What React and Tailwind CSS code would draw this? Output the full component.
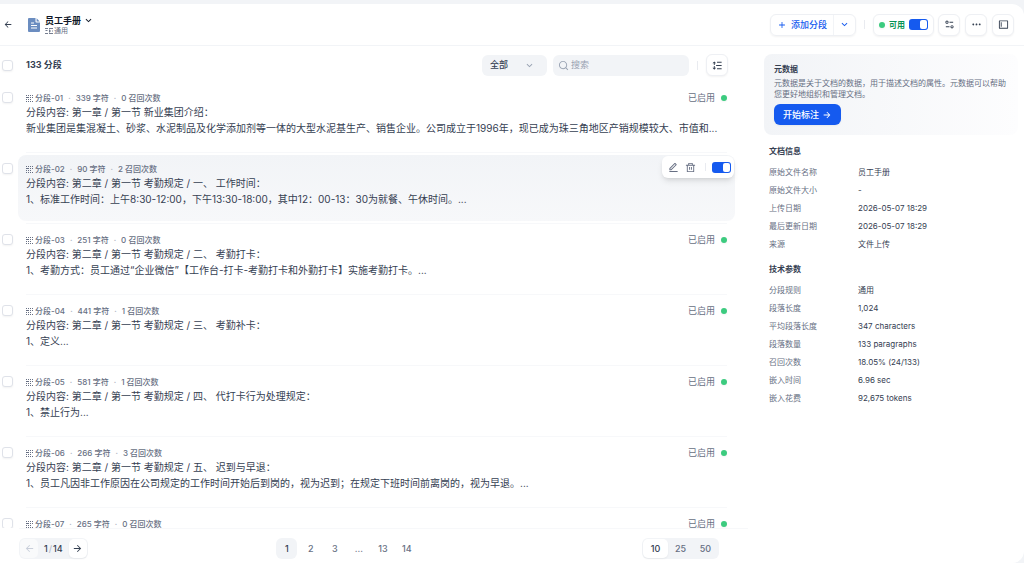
import React, { useState } from 'react';
import {
    RiArrowLeftLine,
    RiArrowRightLine,
    RiArrowDownSLine,
    RiAddLine,
    RiSearchLine,
    RiEditLine,
    RiDeleteBinLine,
    RiEqualizer2Line,
    RiMoreFill,
    RiLayoutLeft2Line,
    RiLineHeight,
} from 'react-icons/ri';

const segments = [
    {
        id: '01',
        chars: 339,
        hits: 0,
        title: '分段内容: 第一章 / 第一节 新业集团介绍：',
        text: '新业集团是集混凝土、砂浆、水泥制品及化学添加剂等一体的大型水泥基生产、销售企业。公司成立于1996年，现已成为珠三角地区产销规模较大、市值和...',
    },
    {
        id: '02',
        chars: 90,
        hits: 2,
        title: '分段内容: 第二章 / 第一节 考勤规定 / 一、 工作时间：',
        text: '1、标准工作时间：上午8:30-12:00，下午13:30-18:00，其中12：00-13：30为就餐、午休时间。...',
        active: true,
    },
    {
        id: '03',
        chars: 251,
        hits: 0,
        title: '分段内容: 第二章 / 第一节 考勤规定 / 二、 考勤打卡：',
        text: '1、考勤方式：员工通过“企业微信”【工作台-打卡-考勤打卡和外勤打卡】实施考勤打卡。...',
    },
    {
        id: '04',
        chars: 441,
        hits: 1,
        title: '分段内容: 第二章 / 第一节 考勤规定 / 三、 考勤补卡：',
        text: '1、定义...',
    },
    {
        id: '05',
        chars: 581,
        hits: 1,
        title: '分段内容: 第二章 / 第一节 考勤规定 / 四、 代打卡行为处理规定：',
        text: '1、禁止行为...',
    },
    {
        id: '06',
        chars: 266,
        hits: 3,
        title: '分段内容: 第二章 / 第一节 考勤规定 / 五、 迟到与早退：',
        text: '1、员工凡因非工作原因在公司规定的工作时间开始后到岗的，视为迟到；在规定下班时间前离岗的，视为早退。...',
    },
    { id: '07', chars: 265, hits: 0 },
];

const docInfo = [
    ['原始文件名称', '员工手册'],
    ['原始文件大小', '-'],
    ['上传日期', '2026-05-07 18:29'],
    ['最后更新日期', '2026-05-07 18:29'],
    ['来源', '文件上传'],
];

const techParams = [
    ['分段规则', '通用'],
    ['段落长度', '1,024'],
    ['平均段落长度', '347 characters'],
    ['段落数量', '133 paragraphs'],
    ['召回次数', '18.05% (24/133)'],
    ['嵌入时间', '6.96 sec'],
    ['嵌入花费', '92,675 tokens'],
];

const Checkbox = ({ label }) => (
    <input
        type="checkbox"
        aria-label={label}
        className="block size-[11px] shrink-0 appearance-none rounded-[3px] border border-[#dfe2e9] bg-white shadow-xs checked:border-[#155aef] checked:bg-[#155aef]"
    />
);

const Toggle = ({ label, checked, onChange }) => (
    <input
        type="checkbox"
        role="switch"
        aria-label={label}
        checked={checked}
        onChange={(e) => onChange(e.target.checked)}
        className="flex h-[11px] w-[19px] shrink-0 appearance-none items-center rounded-[3px] bg-[#d0d5dc] px-px before:block before:h-[9px] before:w-[7px] before:rounded-[2px] before:bg-white checked:justify-end checked:bg-[#155aef]"
    />
);

const Dot = () => <span className="size-[6px] shrink-0 rounded-full bg-[#3ccb7f] shadow-xs"></span>;

const IconButton = ({ label, children }) => (
    <button
        aria-label={label}
        className="flex size-[22px] shrink-0 items-center justify-center rounded-md border border-[#eef0f4] bg-white text-[#354052] shadow-xs"
    >
        {children}
    </button>
);

const GridIcon = () => (
    <svg viewBox="0 0 8 8" className="size-2 shrink-0" fill="#676f83" aria-hidden="true">
        <path d="M0 1h1v1H0zM2 1h1v1H2zM4 1h1v1H4zM6 1h1v1H6zM0 3h3v1H0zM4 3h1v1H4zM6 3h1v1H6zM0 5h1v1H0zM2 5h1v1H2zM4 5h1v1H4zM0 7h1v1H0zM2 7h1v1H2zM4 7h1v1H4zM6 7h1v1H6z" />
    </svg>
);

const ModeIcon = () => (
    <svg viewBox="0 0 8 8" className="size-2 shrink-0" fill="none" stroke="#676f83" strokeWidth="0.9" aria-hidden="true">
        <path d="M0 1.5h3M4 1.5h4M0 6.5h3M4 6.5h4M.5 3.5h2M4.5 2.5v3M4.5 4H6M7 4h1" />
    </svg>
);

const FileIcon = () => (
    <svg viewBox="0 0 12 14" className="h-[14px] w-3 shrink-0" aria-hidden="true">
        <path d="M1 0h6.5v3.6a.9.9 0 0 0 .9.9H12V13a1 1 0 0 1-1 1H1a1 1 0 0 1-1-1V1a1 1 0 0 1 1-1z" fill="#6b8dc0" />
        <path d="M8.6.3 11.7 3.4H8.6z" fill="#6b8dc0" />
        <path d="M3 5h3M3 7.5h6M3 10h6" stroke="#fff" strokeWidth="1" />
    </svg>
);

const Segment = ({ item }) => {
    const [enabled, setEnabled] = useState(true);

    return (
        <li className="flex items-start gap-[5px]">
            <div className="pt-[8px]">
                <Checkbox label={`分段-${item.id}`} />
            </div>
            <div className="min-w-0 flex-1">
                <div className={`relative h-[66px] rounded-lg px-2 pt-[7px] ${item.active ? 'bg-linear-to-b from-[#f2f4f7] to-[#f7f8fa]' : ''}`}>
                    <div className="flex h-[13px] items-center justify-between">
                        <div className="flex items-center text-[8px] font-medium text-[#676f83]">
                            <GridIcon />
                            <span className="ml-px">分段-{item.id}</span>
                            <span className="mx-[5px] text-[#b4bac6]">·</span>
                            <span>{item.chars} 字符</span>
                            <span className="mx-[5px] text-[#b4bac6]">·</span>
                            <span>{item.hits} 召回次数</span>
                        </div>
                        {!item.active && (
                            <div className="flex items-center gap-[6px] text-[9px] text-[#676f83]">
                                已启用
                                <Dot />
                            </div>
                        )}
                    </div>
                    {item.title && <p className="truncate text-[10px] leading-4 text-[#354052]">{item.title}</p>}
                    {item.text && <p className="truncate text-[10px] leading-4 text-[#354052]">{item.text}</p>}

                    {item.active && (
                        <div className="absolute top-px right-px flex h-[22px] items-center rounded-md bg-white px-[3px] text-[#676f83] shadow-md">
                            <button aria-label="编辑" className="flex h-4 w-[17px] items-center justify-center">
                                <RiEditLine size={11} />
                            </button>
                            <button aria-label="删除" className="flex h-4 w-[17px] items-center justify-center">
                                <RiDeleteBinLine size={11} />
                            </button>
                            <span className="mx-[6px] h-2 w-px bg-[#e9ebf0]"></span>
                            <Toggle label="启用分段" checked={enabled} onChange={setEnabled} />
                        </div>
                    )}
                </div>
                <div className="mx-2 my-[2px] h-px bg-[#f7f8fa]"></div>
            </div>
        </li>
    );
};

const InfoList = ({ title, rows }) => (
    <section>
        <h3 className="text-[8px] leading-3 font-bold text-[#354052]">{title}</h3>
        <dl className="mt-[9px] grid grid-cols-[89px_1fr] gap-y-[6px] text-[8px] leading-3">
            {rows.map(([name, value]) => (
                <React.Fragment key={name}>
                    <dt className="text-[#676f83]">{name}</dt>
                    <dd className="text-[#354052]">{value}</dd>
                </React.Fragment>
            ))}
        </dl>
    </section>
);

const App = () => {
    const [available, setAvailable] = useState(true);
    const [page, setPage] = useState('1');
    const [limit, setLimit] = useState(10);

    return (
        <div className="h-screen bg-[#f2f4f7] pt-1 font-['Inter','Noto_Sans_CJK_SC',sans-serif] [text-spacing-trim:space-all]">
            <div className="flex h-full flex-col overflow-hidden rounded-r-xl bg-white">
                {/* Thanh tiêu đề */}
                <header className="flex h-[42px] shrink-0 items-center border-b border-[#f2f4f7] pr-[10px] pl-[3px]">
                    <button aria-label="返回" className="flex size-[10px] items-center justify-center text-[#354052]">
                        <RiArrowLeftLine size={11} />
                    </button>
                    <div className="ml-[15px] flex items-center gap-[5px]">
                        <FileIcon />
                        <div>
                            <button className="flex items-center gap-[2px] text-[9px] leading-3 font-bold text-[#101828]">
                                员工手册
                                <RiArrowDownSLine size={11} />
                            </button>
                            <div className="flex items-center gap-px text-[7px] leading-2 text-[#676f83]">
                                <ModeIcon />
                                通用
                            </div>
                        </div>
                    </div>

                    <div className="ml-auto flex items-center">
                        <div className="flex h-[22px] rounded-md border border-[#eef0f4] text-[9px] font-medium text-[#155aef] shadow-xs">
                            <button className="flex items-center gap-1 border-r border-[#f2f4f7] px-[6px]">
                                <RiAddLine size={10} />
                                添加分段
                            </button>
                            <button aria-label="更多添加方式" className="flex w-[21px] items-center justify-center">
                                <RiArrowDownSLine size={11} />
                            </button>
                        </div>
                        <span className="mx-2 h-[9px] w-px bg-[#e9ebf0]"></span>
                        <div className="flex h-[22px] items-center gap-1 rounded-md border border-[#eef0f4] px-[5px] text-[8px] font-bold text-[#079455] shadow-xs">
                            <Dot />
                            可用
                            <Toggle label="可用" checked={available} onChange={setAvailable} />
                        </div>
                        <div className="ml-1 flex gap-[5px]">
                            <IconButton label="设置"><RiEqualizer2Line size={11} /></IconButton>
                            <IconButton label="更多"><RiMoreFill size={11} /></IconButton>
                            <IconButton label="侧栏"><RiLayoutLeft2Line size={11} /></IconButton>
                        </div>
                    </div>
                </header>

                <div className="flex min-h-0 flex-1">
                    {/* Danh sách phân đoạn */}
                    <main className="flex min-w-0 flex-1 flex-col pl-[2px]">
                        <div className="flex h-[38px] shrink-0 items-center pr-5">
                            <Checkbox label="全选" />
                            <h2 className="ml-[13px] text-[9px] font-bold text-[#354052]">133 分段</h2>
                            <div className="ml-auto flex items-center">
                                <div className="relative">
                                    <select aria-label="状态" className="block h-[21px] w-[65px] appearance-none rounded-md bg-[#f2f4f7] px-2 text-[9px] font-medium text-[#354052]">
                                        <option>全部</option>
                                        <option>已启用</option>
                                    </select>
                                    <RiArrowDownSLine size={11} className="pointer-events-none absolute top-[5px] right-3 text-[#98a2b2]" />
                                </div>
                                <label className="ml-[6px] flex h-[21px] w-[136px] items-center gap-[2px] rounded-md bg-[#f2f4f7] px-[5px]">
                                    <RiSearchLine size={11} className="shrink-0 text-[#98a2b2]" />
                                    <input type="text" aria-label="搜索" placeholder="搜索" className="w-full min-w-0 text-[9px] outline-none placeholder:text-[#98a2b2]" />
                                </label>
                                <span className="mx-2 h-[9px] w-px bg-[#e9ebf0]"></span>
                                <IconButton label="展开"><RiLineHeight size={11} /></IconButton>
                            </div>
                        </div>

                        <ul className="min-h-0 flex-1 overflow-hidden pr-[13px]">
                            {segments.map((item) => (
                                <Segment key={item.id} item={item} />
                            ))}
                        </ul>

                        <footer className="ml-[17px] flex h-[35px] shrink-0 items-start justify-between border-t border-[#f7f8fa] pt-[9px] pr-[29px] text-[9px] font-medium text-[#676f83]">
                            <div className="flex h-[21px] items-center rounded-md bg-[#f2f4f7] p-px">
                                <button aria-label="上一页" disabled className="flex h-[19px] w-[18px] items-center justify-center rounded-[5px] bg-[#f9fafb] text-[#c8ceda]">
                                    <RiArrowLeftLine size={11} />
                                </button>
                                <span className="px-[6px] text-[#354052]">
                                    1<span className="px-px text-[#b4bac6]">/</span>14
                                </span>
                                <button aria-label="下一页" className="flex h-[19px] w-[18px] items-center justify-center rounded-[5px] bg-white text-[#354052] shadow-xs">
                                    <RiArrowRightLine size={11} />
                                </button>
                            </div>
                            <nav className="flex gap-[3px]">
                                {['1', '2', '3', '...', '13', '14'].map((p) => (
                                    <button
                                        key={p}
                                        onClick={() => setPage(p)}
                                        className={`h-[21px] w-[21px] rounded-md ${p === page ? 'bg-[#f2f4f7] text-[#354052]' : ''}`}
                                    >
                                        {p}
                                    </button>
                                ))}
                            </nav>
                            <div className="pl-9">
                                <div className="flex h-[21px] items-center rounded-md bg-[#f2f4f7] p-px">
                                    {[10, 25, 50].map((n) => (
                                        <button
                                            key={n}
                                            onClick={() => setLimit(n)}
                                            className={`h-[19px] w-[25px] rounded-[5px] ${n === limit ? 'bg-white text-[#354052] shadow-xs' : ''}`}
                                        >
                                            {n}
                                        </button>
                                    ))}
                                </div>
                            </div>
                        </footer>
                    </main>

                    {/* Thông tin tài liệu */}
                    <aside className="w-[276px] shrink-0 pt-2 pr-[6px] pl-4">
                        <div className="rounded-lg bg-linear-to-r from-[#f2f4f7] to-[#fdfdfe] px-[10px] pt-[9px] pb-[10px]">
                            <h3 className="text-[8px] leading-3 font-bold text-[#354052]">元数据</h3>
                            <p className="mt-[3px] text-[8px] leading-[11px] text-[#676f83]">
                                元数据是关于文档的数据，用于描述文档的属性。元数据可以帮助您更好地组织和管理文档。
                            </p>
                            <button className="mt-1 flex h-[21px] items-center gap-[3px] rounded-md bg-[#155aef] px-[9px] text-[9px] font-medium text-white shadow-xs">
                                开始标注
                                <RiArrowRightLine size={10} />
                            </button>
                        </div>
                        <div className="flex flex-col gap-[13px] pt-[10px] pl-[5px]">
                            <InfoList title="文档信息" rows={docInfo} />
                            <InfoList title="技术参数" rows={techParams} />
                        </div>
                    </aside>
                </div>
            </div>
        </div>
    );
};

export default App;
